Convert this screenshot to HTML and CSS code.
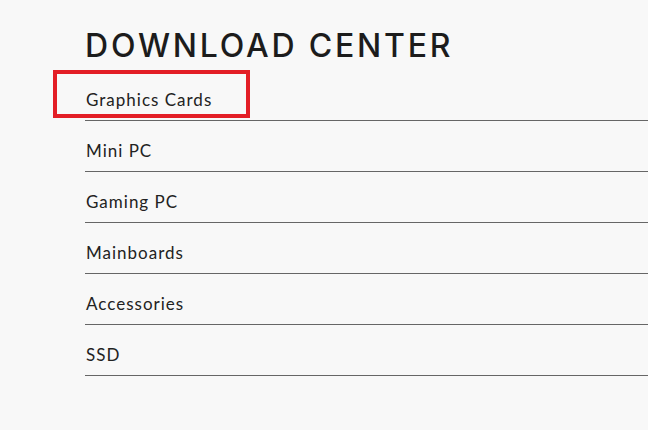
FILE: index.html
```html
<!DOCTYPE html>
<html lang="en">
<head>
<meta charset="utf-8">
<title>Download Center</title>
<link rel="stylesheet" href="styles.css">
</head>
<body>
<main class="page">
  <h1 class="title">DOWNLOAD CENTER</h1>
  <ul class="list">
    <li class="item item--active"><a href="#">Graphics Cards</a></li>
    <li class="item"><a href="#">Mini PC</a></li>
    <li class="item"><a href="#">Gaming PC</a></li>
    <li class="item"><a href="#">Mainboards</a></li>
    <li class="item"><a href="#">Accessories</a></li>
    <li class="item"><a href="#">SSD</a></li>
  </ul>
</main>
</body>
</html>
```
FILE: styles.css
```css
html, body {
  margin: 0;
  padding: 0;
  background: #f8f8f8;
}
body {
  font-family: "Lato", "Inter", sans-serif;
  color: #222;
}
.page {
  padding: 28px 0 0 85px;
}
.title {
  margin: 0;
  font-family: "Inter", "Lato", sans-serif;
  font-size: 32px;
  line-height: 36px;
  font-weight: 500;
  letter-spacing: 2.8px;
  color: #1c1c1c;
}
.list {
  list-style: none;
  margin: 0;
  padding: 0;
}
.item {
  position: relative;
  border-bottom: 1px solid #666;
  padding: 20px 0 10px 1px;
  line-height: 20px;
  font-size: 17px;
  letter-spacing: 1px;
}
.list .item:first-child {
  padding-top: 26px;
}
.item a {
  color: #222;
  text-decoration: none;
}
.item--active::after {
  content: "";
  position: absolute;
  left: -32px;
  top: 6px;
  width: 189px;
  height: 40px;
  border: 4px solid #e31e26;
  pointer-events: none;
}
```
